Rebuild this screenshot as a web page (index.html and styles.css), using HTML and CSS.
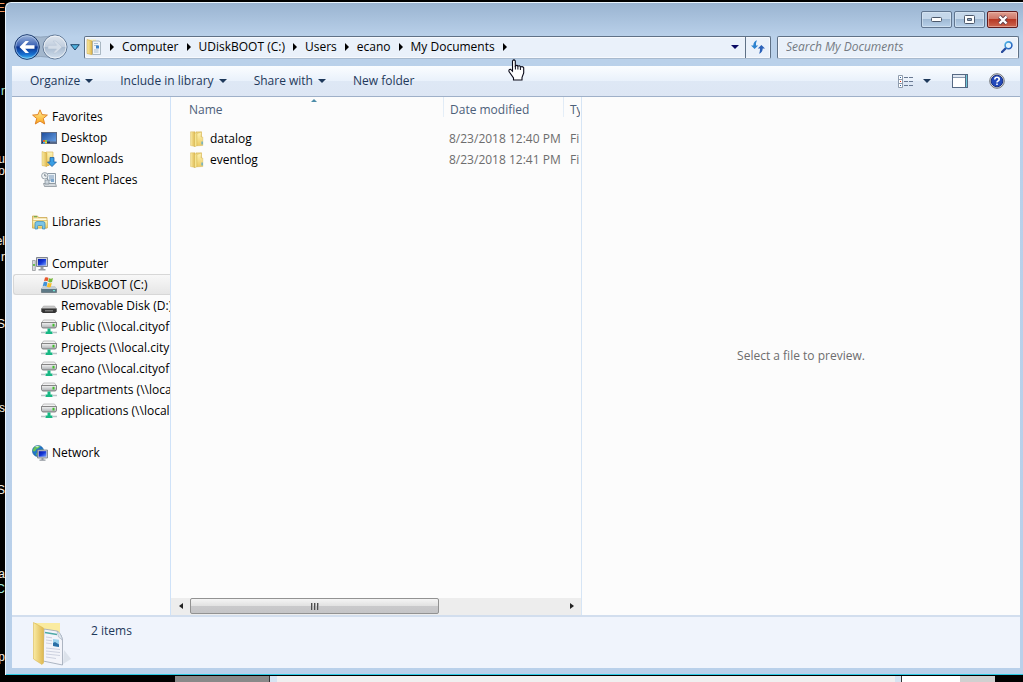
FILE: index.html
```html
<!DOCTYPE html>
<html lang="en">
<head>
<meta charset="utf-8">
<title>My Documents</title>
<link rel="stylesheet" href="styles.css">
</head>
<body>
<svg class="defs" aria-hidden="true">
  <defs>
    <linearGradient id="gold" x1="0" x2="1"><stop offset="0" stop-color="#f9eba4"/><stop offset="1" stop-color="#dfb850"/></linearGradient>
    <linearGradient id="gold-light" x1="0" y1="0" x2="0" y2="1"><stop offset="0" stop-color="#fdf4b8"/><stop offset="1" stop-color="#eccb62"/></linearGradient>
    <linearGradient id="metal" x1="0" y1="0" x2="0" y2="1"><stop offset="0" stop-color="#f4f4f4"/><stop offset="1" stop-color="#a9adb0"/></linearGradient>
    <linearGradient id="screen" x1="0" y1="0" x2="1" y2="1"><stop offset="0" stop-color="#0717a5"/><stop offset=".5" stop-color="#1638d8"/><stop offset="1" stop-color="#7da4ff"/></linearGradient>
    <linearGradient id="sky" x1="0" y1="0" x2="1" y2="1"><stop offset="0" stop-color="#1c4b9c"/><stop offset="1" stop-color="#70a9ea"/></linearGradient>
    <linearGradient id="star" x1="0" y1="0" x2="0" y2="1"><stop offset="0" stop-color="#fff09b"/><stop offset="1" stop-color="#fba61b"/></linearGradient>
    <linearGradient id="orb" x1="0" y1="0" x2="0" y2="1"><stop offset="0" stop-color="#9fb6dc"/><stop offset=".45" stop-color="#3a62b4"/><stop offset=".5" stop-color="#0b3390"/><stop offset=".8" stop-color="#1870d0"/><stop offset="1" stop-color="#49c9fb"/></linearGradient>
    <linearGradient id="orb-off" x1="0" y1="0" x2="0" y2="1"><stop offset="0" stop-color="#dfe6ee"/><stop offset=".48" stop-color="#c2cfdf"/><stop offset=".52" stop-color="#a9bbd0"/><stop offset="1" stop-color="#d4e1ef"/></linearGradient>
    <linearGradient id="lens" x1="0" y1="0" x2="1" y2="1"><stop offset="0" stop-color="#4fb7e8"/><stop offset="1" stop-color="#1d4db3"/></linearGradient>

    <symbol id="i-star" viewBox="0 0 16 16"><path d="M8 .8 10.1 5.6 15.4 6.1 11.3 9.5 12.7 15 8 12.1 3.3 15 4.7 9.5.6 6.1 5.9 5.6Z" fill="url(#star)" stroke="#dd7b1c" stroke-width=".9"/></symbol>
    <symbol id="i-desktop" viewBox="0 0 16 16"><rect x=".5" y="2.500" width="15" height="11" fill="url(#sky)" stroke="#5e6b85"/><path d="M1 11.500h14V13H1z" fill="#1d3152"/><path d="M2 10h2v2H2z" fill="#e7612f"/><path d="M4 10h2v2H4z" fill="#8cd04b"/><path d="M2 12h2v1.500H2z" fill="#4fb6f2"/><path d="M4 12h2v1.500H4z" fill="#fbd33c"/><path d="M9 11.500h6v1H9z" fill="#89a1c8"/></symbol>
    <symbol id="i-downloads" viewBox="0 0 16 16"><path d="M1 1h7v14H1z" fill="url(#gold)"/><path d="M5 1h7v13H5z" fill="url(#gold-light)" stroke="#d6ad49" stroke-width=".6"/><path d="M1 .5l5 1.500V15.700L1 14.500Z" fill="url(#gold)" stroke="#d2a63d" stroke-width=".4"/><path d="M9 6.500h4V11h2.500L11 15.600 6.500 11H9Z" fill="#3a9ee4" stroke="#15579f" stroke-width=".7"/></symbol>
    <symbol id="i-recent" viewBox="0 0 16 16"><path d="M6.500 1.500h8v10h-8z" fill="#eaf1f6" stroke="#8e9ba6"/><path d="M8 4h5M8 6h5M8 8h3" stroke="#7796b8"/><path d="M10 7h3v3h-3z" fill="#7ea6cb"/><path d="M2.500 11.500h12l1 3h-12Z" fill="#d3d8dc" stroke="#8a939b" stroke-width=".8"/><path d="M4 8h4v4H4z" fill="#cfd8df" stroke="#7d8994" stroke-width=".7"/><circle cx="3.800" cy="3.800" r="3.200" fill="#eff3f5" stroke="#8f9aa3" stroke-width=".9"/><path d="M3.800 1.800v2.200h1.700" fill="none" stroke="#5a6670" stroke-width=".8"/></symbol>
    <symbol id="i-libraries" viewBox="0 0 16 16"><path d="M.5 2h5l1 1.500h8.500V14H.5z" fill="#eed58b" stroke="#c69f42" stroke-width=".7"/><path d="M1.500 4.500h13V6h-13z" fill="#fffbe6"/><path d="M2 2.200h3v1H2z" fill="#58a94d"/><path d="M.5 6.500h15V14H.5z" fill="url(#gold-light)" stroke="#d0ab4e" stroke-width=".5"/><path d="M3 15V9.500Q3 7.500 5 7.500h6q2 0 2 2V15h-2.500v-2.500q0-1-1-1h-3q-1 0-1 1V15Z" fill="#7cc4e5" stroke="#3b88b4" stroke-width=".7"/></symbol>
    <symbol id="i-computer" viewBox="0 0 16 16"><path d="M.5 4.500h2.800v10H.5z" fill="#d8dadc" stroke="#8b8e91" stroke-width=".7"/><path d="M1 8h2v2H1z" fill="#68bd54"/><path d="M4.500 1.500h11v9h-11z" fill="#cdd1d8" stroke="#80858f"/><path d="M6 3h8v6.500H6z" fill="url(#screen)"/><path d="M8.500 11h3v2h2v1.500h-7V13h2z" fill="#989da4"/></symbol>
    <symbol id="i-drive-win" viewBox="0 0 16 16"><path d="M2 10.500h12l1.500 1.500v3.500H.5v-3.500Z" fill="#5d7986" stroke="#53616a" stroke-width=".6"/><path d="M2 9h12l1.500 3H.5Z" fill="#c4ced4"/><path d="M12 13h2v1.200h-2z" fill="#72e5d6"/><path d="M4 .6q2-.8 3.500.3L6.600 4.500Q5 3.300 3 4.300Z" fill="#e8562b"/><path d="M8 1.200q2 .9 4-.1L11 5.100q-2 .8-3.900-.3Z" fill="#79b83b"/><path d="M2.800 5.100q2-.8 3.600.3L5.500 9.500q-2-1.300-3.800-.3Z" fill="#3f92d8"/><path d="M6.900 5.800q2 1 3.900.2l-1 4.100q-2 .8-3.900-.3Z" fill="#f8bf2b"/></symbol>
    <symbol id="i-removable" viewBox="0 0 16 16"><path d="M2.500 8h11l2 3H.5Z" fill="#c7c7c7" stroke="#a2a2a2" stroke-width=".5"/><path d="M.3 10.500h15.400v3l-1.500 1.500H1.800L.3 13.500Z" fill="#353535"/><path d="M4 12h8v1.500H4z" fill="#757575"/></symbol>
    <symbol id="i-netdrive" viewBox="0 0 16 16"><path d="M2.500 1h11l2 3H.5Z" fill="#f2f2f2" stroke="#9c9c9c" stroke-width=".6"/><path d="M.5 3.500h15v4L14.500 9h-13L.5 7.500Z" fill="url(#metal)" stroke="#6d6d6d" stroke-width=".8"/><path d="M11.500 4.800h2v2.700h-2z" fill="#42bd2e"/><path d="M6.500 9.500h3v3h2v2.500h-7v-2.500h2z" fill="#17b883"/><path d="M0 12.800h4.500v1.500H0zM11.500 12.800H16v1.500h-4.500z" fill="#b9c4c6"/></symbol>
    <symbol id="i-network" viewBox="0 0 16 16"><circle cx="6" cy="6" r="5.600" fill="#2077c7" stroke="#165391" stroke-width=".5"/><path d="M2 2.500Q5 0 8 1L7 3 4.500 4 3 6.500.6 6ZM6 7l2-2 3-.5v3L8 10l-3 1-1-2Z" fill="#67c258"/><path d="M3 1.700q2-1.200 4-.8L5.500 2.500Z" fill="#c9f0d0"/><path d="M5.500 5h10v8h-10z" fill="#c7ccd5" stroke="#747b87" stroke-width=".8"/><path d="M6.700 6.200h7.600v5.500H6.700z" fill="url(#screen)"/><path d="M9.500 13h2v1.500h2v1.300h-6v-1.300h2z" fill="#91979f"/></symbol>
    <symbol id="i-folder" viewBox="0 0 16 16"><path d="M7 .8h5.500v13H7z" fill="url(#gold)" stroke="#d3b04e" stroke-width=".4"/><path d="M1.500.8H6V15.500L1.500 14.500Z" fill="url(#gold)" stroke="#d3b04e" stroke-width=".4"/><path d="M5.500 2.500 8 1.200v13.500L5.500 15.800Z" fill="#f6e592" stroke="#cba944" stroke-width=".4"/><path d="M12 6h1.800v8.500L8 14.800V2.500L12.500 1Z" fill="url(#gold-light)" stroke="#d3b04e" stroke-width=".4"/><path d="M12.500 10.500h1.200v3h-1.200z" fill="#4aa8dc"/></symbol>
    <symbol id="i-docs" viewBox="0 0 16 16"><path d="M1 .5h9v14H1z" fill="url(#gold-light)"/><path d="M6.500 2h6.500l1.500 1V15.500H6.500z" fill="#f1f5f9" stroke="#8d9dab" stroke-width=".7"/><path d="M8 4.500h4M8 6.500h4M8 11h4.500M8 13h4.500" stroke="#9ab1c8" stroke-width=".8"/><path d="M10 6.500h3V9.500h-3z" fill="#3d82cb"/><path d="M1 .5 6 2v13.800L1 14.500Z" fill="url(#gold)" stroke="#cda343" stroke-width=".5"/></symbol>
    <symbol id="i-crumb" viewBox="0 0 4 8"><path d="M0 0 4 4 0 8Z" fill="#000"/></symbol>
    <symbol id="i-down" viewBox="0 0 8 4"><path d="M0 0h8L4 4Z" fill="currentColor"/></symbol>
  </defs>
</svg>

<main class="desktop">
  <div class="console" aria-hidden="true">
    <span class="orange" style="top:0">E</span><span class="cyan" style="top:83px">r</span><span style="top:151px">u</span><span style="top:163px">o</span><span style="top:233px">el</span><span style="top:249px">r</span><span style="top:316px">S</span><span style="top:400px">s</span><span style="top:482px">S</span><span style="top:566px">a</span><span class="cyan" style="top:581px">C</span><span style="top:649px">p</span>
  </div>
  <div class="behind" aria-hidden="true"><i class="b-grey"></i><i class="b-edge"></i><i class="b-page"></i><i class="b-edge right"></i><i class="b-white"></i><i class="b-silver"></i></div>

  <section class="window" aria-label="My Documents">
    <header class="caption">
      <button class="cap" aria-label="Minimize"><svg width="11" height="5" viewBox="0 0 11 5"><rect x=".5" y=".5" width="10" height="4" rx="1" fill="#fff" stroke="#4c586b"/></svg></button>
      <button class="cap" aria-label="Maximize"><svg width="11" height="9" viewBox="0 0 11 9"><rect x=".5" y=".5" width="10" height="8" rx="1" fill="#fff" stroke="#4c586b"/><path d="M3.500 3.500h4v2h-4z" fill="#8da5c1" stroke="#4c586b"/></svg></button>
      <button class="cap close" aria-label="Close"><svg width="12" height="10" viewBox="0 0 12 10"><path d="m2.500 1.500 7 7m0-7-7 7" stroke="#5c3c48" stroke-width="4"/><path d="m2.500 1.500 7 7m0-7-7 7" stroke="#fff" stroke-width="2.400"/></svg></button>
    </header>

    <nav class="navbar" aria-label="Address">
      <svg class="orbs" width="56" height="28" viewBox="0 0 56 28" role="img" aria-label="Back and forward">
        <path d="M13 2Q28 6 41 2V26Q28 21 13 26Z" fill="#a3b7cd" stroke="#8498b0" stroke-width=".7"/>
        <circle cx="14" cy="14" r="12.300" fill="url(#orb)" stroke="#17376c"/><circle cx="14" cy="14" r="11.300" fill="none" stroke="#c9dcf3" stroke-opacity=".55"/>
        <path d="M6.500 14l6-6h3.500l-3.800 4.200H21.500v3.600h-9.300L16 20h-3.500Z" fill="#fff"/>
        <circle cx="42" cy="14" r="12" fill="url(#orb-off)" stroke="#657c99"/><circle cx="42" cy="14" r="11" fill="none" stroke="#fff" stroke-opacity=".6"/>
        <path d="M49 14l-6-6h-3l3.600 4.300H35v3.600h8.600L40 20h3Z" fill="#d4dde8" stroke="#b4c3d4" stroke-width=".5"/>
      </svg>
      <button class="history" aria-label="Recent pages"><svg width="10" height="7" viewBox="0 0 10 7"><path d="M.7.700h8.600L5 6Z" fill="#4fb2df" stroke="#1c4469"/></svg></button>
      <div class="address">
        <svg class="ico"><use href="#i-docs"/></svg>
        <ol class="crumbs">
          <li><svg class="sep"><use href="#i-crumb"/></svg><a href="#">Computer</a></li>
          <li><svg class="sep"><use href="#i-crumb"/></svg><a href="#">UDiskBOOT (C:)</a></li>
          <li><svg class="sep"><use href="#i-crumb"/></svg><a href="#">Users</a></li>
          <li><svg class="sep"><use href="#i-crumb"/></svg><a href="#">ecano</a></li>
          <li><svg class="sep"><use href="#i-crumb"/></svg><a href="#">My Documents</a></li>
          <li><svg class="sep"><use href="#i-crumb"/></svg></li>
        </ol>
        <button class="addr-drop" aria-label="Previous locations"><svg class="down"><use href="#i-down"/></svg></button>
        <button class="refresh" aria-label="Refresh"><svg width="14" height="14" viewBox="0 0 14 14"><path d="M0 5.500h2.300Q2.300 1.500 6 .3 4.800 2.500 5 5.500h2.200L3.600 9Z" fill="#2d83cf"/><path d="M14 8.500h-2.300Q11.700 12.500 8 13.700 9.200 11.500 9 8.500H6.800L10.400 5Z" fill="#2c62b9"/></svg></button>
      </div>
      <label class="search"><input type="text" placeholder="Search My Documents" aria-label="Search My Documents"><svg width="12" height="12" viewBox="0 0 12 12"><path d="M1 11 5.500 6.500" stroke="#2a4c9c" stroke-width="2.400" stroke-linecap="round"/><circle cx="7.500" cy="4.300" r="3.400" fill="#e6f5fd" stroke="url(#lens)" stroke-width="1.600"/></svg></label>
    </nav>

    <div class="client">
      <div class="toolbar">
        <button>Organize <svg class="down"><use href="#i-down"/></svg></button>
        <button>Include in library <svg class="down"><use href="#i-down"/></svg></button>
        <button>Share with <svg class="down"><use href="#i-down"/></svg></button>
        <button>New folder</button>
        <div class="tools">
          <button aria-label="Change view"><svg width="16" height="13" viewBox="0 0 16 13"><path d="M.5.500h4v12h-4zM.5 4.500h4M.5 8.500h4" fill="#fff" stroke="#8f9cad"/><path d="M2 2h1v1H2z" fill="#2763a7"/><path d="M2 6h1v1H2z" fill="#d2341f"/><path d="M2 10h1v1H2z" fill="#2763a7"/><path d="M6 2.500h4m1 0h4M6 6.500h4m1 0h4M6 10.500h4m1 0h4" stroke="#697992"/></svg><svg class="down"><use href="#i-down"/></svg></button>
          <button aria-label="Preview pane"><svg width="16" height="14" viewBox="0 0 16 14"><rect x=".5" y=".5" width="15" height="13" fill="#fff" stroke="#566983"/><path d="M1 1h14v2.500H1z" fill="#dfe7f2"/><path d="M1 3.500h12" stroke="#8b9bb1"/><path d="M14 1h1v12h-1z" fill="#6fc8d8"/><path d="M13.500 1v12" stroke="#566983"/></svg></button>
          <button aria-label="Help"><svg width="16" height="16" viewBox="0 0 16 16"><circle cx="8" cy="8" r="7.300" fill="#d7d9dc" stroke="#74777c"/><circle cx="8" cy="8" r="5.800" fill="#2249bb" stroke="#172f83"/><path d="M5.800 6.500Q5.800 4.300 8 4.300t2.200 1.900Q10.200 7.300 9 8q-1 .5-1 1.400M8 10.500v1.600" fill="none" stroke="#fff" stroke-width="1.600"/></svg></button>
        </div>
      </div>

      <div class="panes">
        <nav class="tree" aria-label="Folders">
          <a href="#"><svg class="ico"><use href="#i-star"/></svg>Favorites</a>
          <a class="sub" href="#"><svg class="ico"><use href="#i-desktop"/></svg>Desktop</a>
          <a class="sub" href="#"><svg class="ico"><use href="#i-downloads"/></svg>Downloads</a>
          <a class="sub" href="#"><svg class="ico"><use href="#i-recent"/></svg>Recent Places</a>
          <a class="group" href="#"><svg class="ico"><use href="#i-libraries"/></svg>Libraries</a>
          <a class="group" href="#"><svg class="ico"><use href="#i-computer"/></svg>Computer</a>
          <a class="sub current" href="#"><svg class="ico"><use href="#i-drive-win"/></svg>UDiskBOOT (C:)</a>
          <a class="sub" href="#"><svg class="ico"><use href="#i-removable"/></svg>Removable Disk (D:)</a>
          <a class="sub" href="#"><svg class="ico"><use href="#i-netdrive"/></svg>Public (\\local.cityof</a>
          <a class="sub" href="#"><svg class="ico"><use href="#i-netdrive"/></svg>Projects (\\local.city</a>
          <a class="sub" href="#"><svg class="ico"><use href="#i-netdrive"/></svg>ecano (\\local.cityof</a>
          <a class="sub" href="#"><svg class="ico"><use href="#i-netdrive"/></svg>departments (\\loca</a>
          <a class="sub" href="#"><svg class="ico"><use href="#i-netdrive"/></svg>applications (\\local</a>
          <a class="group" href="#"><svg class="ico"><use href="#i-network"/></svg>Network</a>
        </nav>

        <div class="list">
          <div class="scroller">
            <table>
              <colgroup><col class="c-name"><col class="c-date"><col></colgroup>
              <thead><tr><th>Name<svg class="sort" width="6" height="3" viewBox="0 0 6 3"><path d="M0 3 3 0 6 3Z" fill="#4d8ca8"/></svg></th><th>Date modified</th><th>Ty</th></tr></thead>
              <tbody>
                <tr><td><a href="#"><svg class="ico"><use href="#i-folder"/></svg>datalog</a></td><td>8/23/2018 12:40 PM</td><td>Fi</td></tr>
                <tr><td><a href="#"><svg class="ico"><use href="#i-folder"/></svg>eventlog</a></td><td>8/23/2018 12:41 PM</td><td>Fi</td></tr>
              </tbody>
            </table>
          </div>
          <div class="hscroll">
            <button aria-label="Scroll left"><svg width="4" height="6" viewBox="0 0 4 6"><path d="M4 0 0 3 4 6Z" fill="#222"/></svg></button>
            <div class="track"><div class="thumb"><i></i><i></i><i></i></div></div>
            <button aria-label="Scroll right"><svg width="4" height="6" viewBox="0 0 4 6"><path d="M0 0 4 3 0 6Z" fill="#222"/></svg></button>
          </div>
        </div>

        <aside class="preview">Select a file to preview.</aside>
      </div>

      <footer class="details">
        <svg width="40" height="44" viewBox="0 0 40 44"><path d="M30 42 38 37 31 28Z" fill="#cfd5df" opacity=".6"/><path d="M1 1h26v20H1z" fill="#f2dc7b"/><path d="M3 1h24v14H12z" fill="#faeba0"/><path d="M11 7 24 9Q29 12 29.500 19V43L10 39Z" fill="#f3f4fa" stroke="#9aa5b4" stroke-width=".8"/><path d="M12 10.500 24 12.500" stroke="#4fa9a6" stroke-width="1.300"/><path d="m13 15 6 .8m-6 2.200 6 .8m-6 2.200 6 .8m-6 4.200 14 1.500m-14 1.500 14 1.500m-14 1.500 14 1.500m-14 1.500 10 1.500" stroke="#c3c8d8" stroke-width=".8"/><path d="m20 17 6 .8V25l-6-1z" fill="#9ed2ec"/><path d="m20 21 2-1 4 2.500V25l-6-1Z" fill="#2b6fa6"/><path d="M24 9Q28 11 29.500 18L25.500 15Z" fill="#dce5ed" stroke="#9aa5b4" stroke-width=".5"/><path d="M.5.500 10.500 6V41L9 42.500.5 37Z" fill="url(#gold)" stroke="#dcb952" stroke-width=".6"/></svg>
        <span>2 items</span>
      </footer>
    </div>
  </section>

  <svg class="cursor" width="17" height="22" viewBox="0 0 17 22" aria-hidden="true"><path d="M4.500 2Q6-.2 7.300 2v5Q9 5.600 9.900 7.200 11.700 6 12.400 8q2.500-1 3.300.8V14L14 18.500V21H5.500v-2L1 12.500Q.5 10 2.700 10.400l1.800 1.800Z" fill="#fff" stroke="#080818" stroke-width="1.100"/><path d="M7.400 7v3.500m2.500-3V10.500m2.500-2.300V11" stroke="#080818"/></svg>
</main>
</body>
</html>
```
FILE: styles.css
```css
* { box-sizing: border-box; }

body {
  margin: 0;
  background: #000;
  font-family: "Open Sans", "Noto Sans", sans-serif;
  font-size: 12px;
  line-height: 16px;
  color: #000;
}

button, input {
  margin: 0;
  padding: 0;
  border: 0;
  background: none;
  font: inherit;
  color: inherit;
}

a { color: inherit; text-decoration: none; }
svg { display: block; flex: none; }
.defs { position: absolute; width: 0; height: 0; }
.ico { width: 16px; height: 16px; }
.down { width: 8px; height: 4px; }
.sep { width: 4px; height: 8px; }

.desktop {
  position: relative;
  height: 100vh;
  overflow: hidden;
}

.console { color: #f2ece2; font-family: "Liberation Sans", sans-serif; font-size: 12px; }
.console span {
  position: absolute;
  left: 0;
  width: 5px;
  overflow: hidden;
  direction: rtl;
}
.console .orange { color: #ef9a67; }
.console .cyan { color: #9fe6de; }

.behind {
  position: absolute;
  inset: auto 28px 0 175px;
  display: flex;
  height: 6px;
}
.b-grey { width: 95px; background: #898989; border-right: 1px solid #333; }
.b-edge { width: 7px; background: #d6e4f2; }
.b-edge.right { border-right: 1px solid #333; }
.b-page { flex: 1; background: #f0f0f0; }
.b-white { width: 58px; background: #fff; }
.b-silver { width: 35px; background: #d0d0d0; }

.window {
  position: absolute;
  inset: 2px 0 7px 5px;
  display: flex;
  flex-direction: column;
  padding: 0 3px 7px 6px;
  border: solid #e9f4fd;
  border-width: 1px 0 0 1px;
  border-radius: 6px 0 0 0;
  box-shadow: inset 0 -1px #2bc9e2;
  background: linear-gradient(#9ab4d1, #bad1ea 34px, #b9d0ea);
}

.caption {
  display: flex;
  justify-content: flex-end;
  align-items: flex-end;
  gap: 2px;
  height: 25px;
  padding-right: 2px;
}
.cap {
  display: flex;
  align-items: center;
  justify-content: center;
  width: 31px;
  height: 17px;
  border: 1px solid #60758f;
  border-radius: 2px;
  background: linear-gradient(#c5d7ea 50%, #9fb9d4 50%, #b8d0e9);
  box-shadow: inset 0 0 0 1px #dce9f599;
}
.cap.close {
  border-color: #611c1e;
  background: linear-gradient(#dfa092 0, #cf7364 48%, #b73824 50%, #cc6650);
  box-shadow: inset 0 0 0 1px #f2c2b699;
}

.navbar {
  display: flex;
  align-items: center;
  height: 38px;
  padding-right: 1px;
}
.orbs { margin-left: 1px; }
.history { display: flex; width: 15px; padding-left: 1px; }

.address, .search {
  display: flex;
  align-items: center;
  height: 23px;
  border: 1px solid #5f7186;
  border-bottom-color: #a8bace;
  border-radius: 2px;
  background: #eaf1fa;
  box-shadow: inset 0 0 0 1px #fff9;
}
.address { flex: 1; padding-left: 1px; }
.crumbs {
  flex: 1;
  display: flex;
  margin: 0;
  padding: 0;
  list-style: none;
}
.crumbs li { display: flex; align-items: center; }
.crumbs .sep { margin: 0 8px; }
.addr-drop, .refresh {
  display: flex;
  align-items: center;
  justify-content: center;
  align-self: stretch;
}
.addr-drop { width: 20px; color: #0a0a63; }
.refresh { width: 25px; border-left: 1px solid #5f7186; }

.search {
  width: 242px;
  margin-left: 6px;
  padding: 0 5px 0 8px;
}
.search input {
  flex: 1;
  min-width: 0;
  font-style: italic;
  outline: 0;
}
.search input::placeholder { color: #747a82; opacity: 1; }

.client {
  flex: 1;
  display: flex;
  flex-direction: column;
  min-height: 0;
  background: #fcfcfc;
}

.toolbar {
  display: flex;
  align-items: center;
  gap: 27px;
  height: 31px;
  padding: 0 15px 0 18px;
  border-bottom: 1px solid #9fb0c8;
  background: linear-gradient(#fbfdff, #e9f1fb 50%, #dee8f5 51%, #dde6f4);
  color: #1e395b;
}
.toolbar button { display: flex; align-items: center; gap: 5px; }
.tools { display: flex; align-items: center; gap: 21px; margin-left: auto; }
.tools button:first-child { gap: 9px; }

.panes { flex: 1; display: flex; min-height: 0; }

.tree {
  width: 159px;
  padding: 9px 0 0 1px;
  border-right: 1px solid #cfe2f8;
  overflow: hidden;
}
.tree a {
  display: flex;
  align-items: center;
  gap: 4px;
  height: 21px;
  padding-left: 19px;
  white-space: nowrap;
  overflow: hidden;
}
.tree .sub { padding-left: 28px; }
.tree .group { margin-top: 21px; }
.tree .current {
  border: 1px solid #d7d7d7;
  border-right: 0;
  border-radius: 3px 0 0 3px;
  padding-left: 27px;
  background: linear-gradient(#f8f8f8, #e6e6e6);
}

.list {
  display: flex;
  flex-direction: column;
  width: 411px;
  border-right: 1px solid #d6e5f5;
}
.scroller { flex: 1; overflow: hidden; padding-right: 1px; }
table {
  width: 100%;
  table-layout: fixed;
  border-collapse: collapse;
}
.c-name { width: 273px; }
.c-date { width: 120px; }
th, td { padding: 0 0 0 6px; white-space: nowrap; overflow: hidden; }
th {
  position: relative;
  height: 26px;
  text-align: left;
  font-weight: 400;
  color: #4c607a;
  background: linear-gradient(#dfeaf6, #e6eff8) right top / 1px 20px no-repeat;
}
th:first-child { padding-left: 18px; }
th:last-child { background: none; }
.sort { position: absolute; left: 50%; top: 2px; margin-left: 3px; }
thead::after { content: ""; display: block; height: 5px; }
td { height: 21px; padding-left: 5px; color: #6d6d6d; }
td:first-child { padding-left: 18px; color: #000; }
td:last-child { padding-left: 6px; }
td a { display: flex; align-items: center; gap: 5px; }

.hscroll {
  display: flex;
  height: 17px;
  padding-bottom: 1px;
  background: #ededed;
}
.hscroll button {
  display: flex;
  align-items: center;
  justify-content: center;
  width: 19px;
}
.track { flex: 1; display: flex; }
.thumb {
  display: flex;
  align-items: center;
  justify-content: center;
  gap: 1px;
  width: 67%;
  border: 1px solid #929292;
  border-radius: 2px;
  background: linear-gradient(#f4f4f4, #e2e2e2 48%, #c9c9cb 52%, #c5c5c7);
}
.thumb i { width: 2px; height: 7px; background: linear-gradient(90deg, #4e4e4e 50%, #aaa 50%); }

.preview {
  flex: 1;
  display: flex;
  align-items: center;
  justify-content: center;
  color: #6d6d6d;
}

.details {
  display: flex;
  gap: 18px;
  height: 53px;
  padding: 5px 21px 0;
  border-top: 2px solid #d2deee;
  background: #f0f4fc;
  color: #1e395b;
}
.details span { padding-top: 1px; }

.cursor { position: absolute; left: 508px; top: 59px; }
```
